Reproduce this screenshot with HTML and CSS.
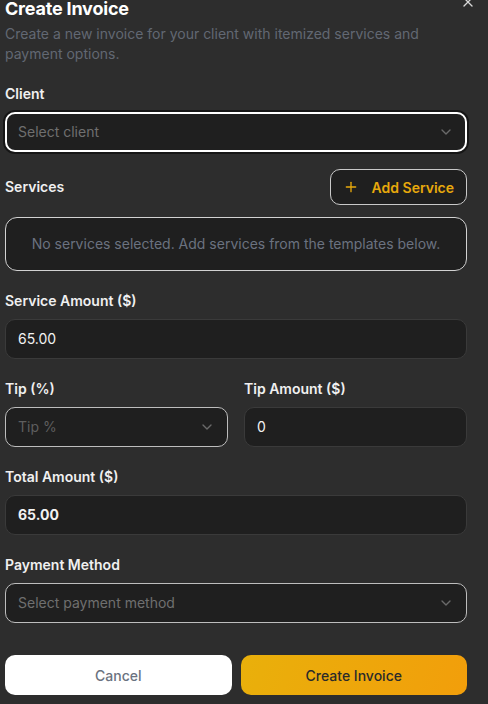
FILE: index.html
```html
<!DOCTYPE html>
<html lang="en">
<head>
<meta charset="utf-8">
<title>Create Invoice</title>
<link rel="stylesheet" href="styles.css">
</head>
<body>
<div class="dialog">
  <button class="close" aria-label="Close">
    <svg viewBox="0 0 24 24" width="16" height="16" fill="none" stroke="currentColor" stroke-width="2" stroke-linecap="round" stroke-linejoin="round"><path d="M18 6 6 18"/><path d="m6 6 12 12"/></svg>
  </button>

  <header class="header">
    <h2 class="title">Create Invoice</h2>
    <p class="desc">Create a new invoice for your client with itemized services and payment options.</p>
  </header>

  <div class="field">
    <label class="label">Client</label>
    <div class="select focused">
      <span class="placeholder">Select client</span>
      <svg class="chev" viewBox="0 0 24 24" width="16" height="16" fill="none" stroke="currentColor" stroke-width="2" stroke-linecap="round" stroke-linejoin="round"><path d="m6 9 6 6 6-6"/></svg>
    </div>
  </div>

  <div class="services">
    <div class="services-head">
      <span class="label">Services</span>
      <button class="add-btn">
        <svg viewBox="0 0 24 24" width="16" height="16" fill="none" stroke="currentColor" stroke-width="2" stroke-linecap="round" stroke-linejoin="round"><path d="M5 12h14"/><path d="M12 5v14"/></svg>
        <span>Add Service</span>
      </button>
    </div>
    <div class="empty">No services selected. Add services from the templates below.</div>
  </div>

  <div class="field">
    <label class="label">Service Amount ($)</label>
    <div class="input">65.00</div>
  </div>

  <div class="row">
    <div class="field">
      <label class="label">Tip (%)</label>
      <div class="select light">
        <span class="placeholder dim">Tip %</span>
        <svg class="chev" viewBox="0 0 24 24" width="16" height="16" fill="none" stroke="currentColor" stroke-width="2" stroke-linecap="round" stroke-linejoin="round"><path d="m6 9 6 6 6-6"/></svg>
      </div>
    </div>
    <div class="field">
      <label class="label">Tip Amount ($)</label>
      <div class="input">0</div>
    </div>
  </div>

  <div class="field">
    <label class="label">Total Amount ($)</label>
    <div class="input strong">65.00</div>
  </div>

  <div class="field">
    <label class="label">Payment Method</label>
    <div class="select light">
      <span class="placeholder">Select payment method</span>
      <svg class="chev" viewBox="0 0 24 24" width="16" height="16" fill="none" stroke="currentColor" stroke-width="2" stroke-linecap="round" stroke-linejoin="round"><path d="m6 9 6 6 6-6"/></svg>
    </div>
  </div>

  <div class="actions">
    <button class="btn cancel">Cancel</button>
    <button class="btn primary">Create Invoice</button>
  </div>
</div>
</body>
</html>
```

FILE: styles.css
```css
* { box-sizing: border-box; }

html, body {
  margin: 0;
  padding: 0;
  background: #2d2d2d;
  overflow: hidden;
}

body {
  font-family: Inter, "Noto Sans", "Liberation Sans", sans-serif;
  color: #f2f2f2;
  font-size: 14px;
  line-height: 20px;
}

.dialog {
  position: relative;
  width: 462px;
  margin-left: 5px;
  display: flex;
  flex-direction: column;
  gap: 20px;
}

.close {
  position: absolute;
  top: -6px;
  left: 455px;
  width: 16px;
  height: 16px;
  padding: 0;
  border: 0;
  background: none;
  color: #d8d8d8;
  display: flex;
}

.header {
  display: flex;
  flex-direction: column;
  gap: 6px;
}

.title {
  margin: 0;
  font-size: 18px;
  line-height: 18px;
  font-weight: 700;
  color: #ffffff;
  letter-spacing: -0.2px;
}

.desc {
  margin: 0;
  color: #626873;
  font-size: 14px;
  line-height: 20px;
}

.field {
  display: flex;
  flex-direction: column;
  gap: 8px;
  min-width: 0;
}

.label {
  font-size: 14px;
  line-height: 20px;
  font-weight: 600;
  color: #f0f0f0;
}

.select,
.input {
  height: 40px;
  border-radius: 10px;
  background: #1f1f1f;
  display: flex;
  align-items: center;
  padding: 0 12px 0 12px;
  border: 1px solid #3a3a3a;
}

.select {
  justify-content: space-between;
}

.select.light {
  border-color: #bdbdbd;
}

.select.focused {
  border: 2px solid #ffffff;
  padding: 0 11px;
  box-shadow: 0 0 0 2px #161616;
}

.placeholder {
  color: #6f6f6f;
}

.placeholder.dim {
  color: #5e5e5e;
}

.chev {
  color: #6a6a6a;
  flex: none;
}

.input {
  color: #f2f2f2;
}

.input.strong {
  font-weight: 700;
}

.services {
  display: flex;
  flex-direction: column;
  gap: 12px;
  margin-top: -3px;
}

.services-head {
  display: flex;
  justify-content: space-between;
  align-items: center;
}

.add-btn {
  height: 36px;
  display: flex;
  align-items: center;
  gap: 13px;
  padding: 0 12px;
  border: 1px solid #c9c9c9;
  border-radius: 10px;
  background: #1f1f1f;
  color: #e8a90c;
  font-family: inherit;
  font-size: 14px;
  font-weight: 600;
}

.empty {
  border: 1px solid #d2d2d2;
  border-radius: 12px;
  padding: 16px;
  background: #1f1f1f;
  color: #6b7280;
  text-align: center;
}

.row {
  display: grid;
  grid-template-columns: 1fr 1fr;
  gap: 16px;
}

.actions {
  display: flex;
  gap: 9px;
  margin-top: 12px;
}

.btn {
  flex: 1;
  height: 40px;
  border-radius: 10px;
  border: 0;
  font-family: inherit;
  font-size: 14px;
  font-weight: 500;
}

.cancel {
  background: #ffffff;
  color: #6b7280;
}

.primary {
  background: linear-gradient(110deg, #e9b00b 0%, #f29e0b 100%);
  color: #2a2a2a;
}
```
